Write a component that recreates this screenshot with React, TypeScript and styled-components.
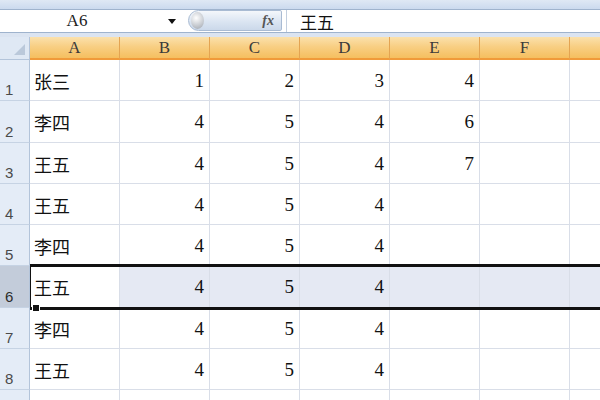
import React from "react";
import styled, { createGlobalStyle, css } from "styled-components";

const GlobalStyle = createGlobalStyle`
  html, body {
    margin: 0;
    padding: 0;
    width: 600px;
    height: 400px;
    overflow: hidden;
    background: #fff;
  }
`;

const Window = styled.div`
  width: 600px;
  height: 400px;
  overflow: hidden;
  display: flex;
  flex-direction: column;
`;

const TopBand = styled.div`
  height: 9px;
  flex: none;
  background: linear-gradient(#dfe8f4, #cbdaee);
  border-bottom: 1px solid #9fb3cd;
`;

const FormulaBar = styled.div`
  height: 22px;
  flex: none;
  display: flex;
  background: #fff;
  border-bottom: 1px solid #9fb3cd;
`;

const NameBox = styled.div`
  width: 188px;
  flex: none;
  display: flex;
  align-items: center;
  font-family: "Liberation Serif", serif;
  font-size: 17px;
  color: #222;
`;

const NameText = styled.span`
  width: 154px;
  text-align: center;
`;

const DropArrow = styled.span`
  width: 0;
  height: 0;
  margin-left: 14px;
  border-left: 4px solid transparent;
  border-right: 4px solid transparent;
  border-top: 5px solid #111;
`;

const FxPill = styled.div`
  width: 94px;
  height: 21px;
  flex: none;
  display: flex;
  align-items: center;
  justify-content: space-between;
  box-sizing: border-box;
  border: 1px solid #a9bbd3;
  border-radius: 11px 2px 2px 11px;
  background: linear-gradient(#f4f7fb, #dbe5f2 55%, #cbd8ea);
`;

const Knob = styled.span`
  width: 13px;
  height: 17px;
  margin-left: 2px;
  border-radius: 50%;
  background: radial-gradient(circle at 40% 35%, #ffffff, #c4c8ce 60%, #9da3ab);
`;

const FxLabel = styled.span`
  margin-right: 7px;
  font-family: "Liberation Serif", serif;
  font-style: italic;
  font-weight: bold;
  font-size: 14px;
  color: #555;
`;

const FormulaInput = styled.div`
  flex: 1;
  display: flex;
  align-items: center;
  padding-left: 13px;
  border-left: 1px solid #c3cfdf;
  margin-left: 4px;
  font-family: "Noto Sans CJK SC", sans-serif;
  font-size: 17px;
  color: #111;
`;

const GapBand = styled.div`
  height: 4px;
  flex: none;
  background: #dbe4f1;
`;

const Sheet = styled.div`
  flex: 1;
  display: flex;
  flex-direction: column;
`;

const Row = styled.div<{ $selected?: boolean }>`
  display: flex;
  height: 41.25px;
  flex: none;
  position: relative;
  ${(p) =>
    p.$selected &&
    css`
      z-index: 1;
      &::after {
        content: "";
        position: absolute;
        left: 30px;
        right: -4px;
        top: -2px;
        bottom: -2px;
        border: 3px solid #111;
        border-left: 1px solid #111;
        pointer-events: none;
      }
    `}
`;

const HeaderRow = styled.div`
  display: flex;
  height: 23px;
  flex: none;
`;

const Corner = styled.div`
  width: 30px;
  flex: none;
  box-sizing: border-box;
  background: #dfe8f4;
  border-right: 1px solid #b3c4da;
  border-bottom: 1px solid #b3c4da;
  position: relative;
  &::after {
    content: "";
    position: absolute;
    right: 4px;
    bottom: 4px;
    border-left: 11px solid transparent;
    border-bottom: 11px solid #bac8da;
  }
`;

const ColHeader = styled.div<{ $w: number }>`
  width: ${(p) => p.$w}px;
  flex: none;
  box-sizing: border-box;
  display: flex;
  align-items: center;
  justify-content: center;
  background: linear-gradient(#fbe1ac, #f8cf84 45%, #f5bf5f);
  border-right: 1px solid #e4a452;
  border-bottom: 2px solid #f09a3a;
  font-family: "Liberation Serif", serif;
  font-size: 17px;
  color: #3a3a3a;
`;

const RowHeader = styled.div<{ $selected?: boolean }>`
  width: 30px;
  flex: none;
  box-sizing: border-box;
  display: flex;
  align-items: flex-end;
  padding: 0 0 2px 5px;
  background: ${(p) => (p.$selected ? "#c3ccda" : "#e4ecf7")};
  border-right: 1px solid #b3c4da;
  border-bottom: 1px solid #c6d3e4;
  font-family: "Liberation Sans", sans-serif;
  font-size: 15px;
  color: ${(p) => (p.$selected ? "#2c2c2c" : "#4a4a4a")};
`;

const Cell = styled.div<{ $w: number; $num?: boolean; $hl?: boolean }>`
  width: ${(p) => p.$w}px;
  flex: none;
  box-sizing: border-box;
  display: flex;
  align-items: center;
  justify-content: ${(p) => (p.$num ? "flex-end" : "flex-start")};
  padding: 2px 5px 0 4px;
  background: ${(p) => (p.$hl ? "#e5e9f3" : "#fff")};
  border-right: 1px solid #d9dee8;
  border-bottom: 1px solid #d9dee8;
  font-family: ${(p) =>
    p.$num ? `"Liberation Serif", serif` : `"Noto Sans CJK SC", sans-serif`};
  font-size: ${(p) => (p.$num ? 19 : 18)}px;
  color: #111;
`;

const FillHandle = styled.span`
  position: absolute;
  left: 32px;
  bottom: -4px;
  width: 6px;
  height: 6px;
  background: #111;
  border: 1px solid #fff;
  z-index: 2;
`;

const columns = ["A", "B", "C", "D", "E", "F", "G"];
const COL_W = 90;

const data: (string | number | null)[][] = [
  ["张三", 1, 2, 3, 4],
  ["李四", 4, 5, 4, 6],
  ["王五", 4, 5, 4, 7],
  ["王五", 4, 5, 4],
  ["李四", 4, 5, 4],
  ["王五", 4, 5, 4],
  ["李四", 4, 5, 4],
  ["王五", 4, 5, 4],
  [],
];

const SELECTED = 6;

export default function App() {
  return (
    <Window>
      <GlobalStyle />
      <TopBand />
      <FormulaBar>
        <NameBox>
          <NameText>A6</NameText>
          <DropArrow />
        </NameBox>
        <FxPill>
          <Knob />
          <FxLabel>fx</FxLabel>
        </FxPill>
        <FormulaInput>王五</FormulaInput>
      </FormulaBar>
      <GapBand />
      <Sheet>
        <HeaderRow>
          <Corner />
          {columns.map((c) => (
            <ColHeader key={c} $w={COL_W}>
              {c}
            </ColHeader>
          ))}
        </HeaderRow>
        {data.map((row, r) => {
          const n = r + 1;
          const sel = n === SELECTED;
          return (
            <Row key={n} $selected={sel}>
              <RowHeader $selected={sel}>{n}</RowHeader>
              {columns.map((c, i) => (
                <Cell key={c} $w={COL_W} $num={i > 0} $hl={sel && i > 0}>
                  {row[i] ?? ""}
                </Cell>
              ))}
              {sel && <FillHandle />}
            </Row>
          );
        })}
      </Sheet>
    </Window>
  );
}
